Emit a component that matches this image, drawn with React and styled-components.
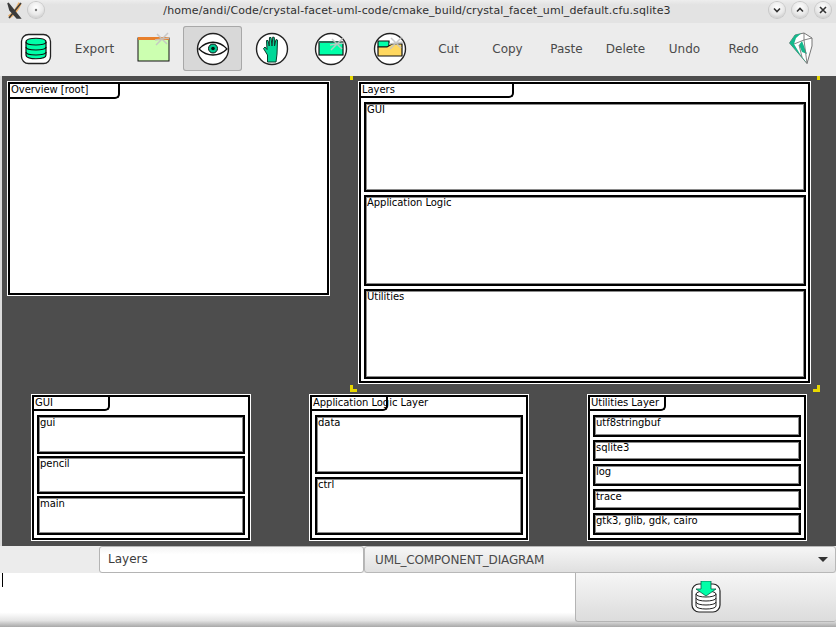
import React from "react";
import styled, { createGlobalStyle } from "styled-components";

const Global = createGlobalStyle`
  html, body { margin: 0; padding: 0; width: 836px; height: 627px; overflow: hidden; background: #e4e4e4; }
  #root { width: 836px; height: 627px; }
  * { box-sizing: border-box; }
`;
const Window = styled.div`
  width: 836px; height: 627px; display: flex; flex-direction: column;
  font-family: "DejaVu Sans", sans-serif; color: #3c3c3c; background: #ececec;
`;
const TitleBar = styled.div`
  height: 23px; flex: none; display: flex; align-items: center; padding: 0 5px 3px 6px;
  background: linear-gradient(#eeeeee, #e3e3e3 20%, #e3e3e3);
`;
const AppMark = styled.div` width: 17px; height: 17px; flex: none; display: flex; `;
const Title = styled.div`
  flex: 1; text-align: center; font-size: 11px; letter-spacing: 0.09px; color: #303030; white-space: nowrap; padding-left: 28px;
`;
const Round = styled.div`
  width: 16px; height: 16px; border-radius: 50%; flex: none; margin-left: ${p => p.$gap || 7}px;
  display: flex; align-items: center; justify-content: center;
  background: radial-gradient(circle at 50% 35%, #ffffff, #e8e8e8 55%, #b8b8b8);
  box-shadow: 0 0 0 1px #c8c8c8;
`;
const Toolbar = styled.div`
  height: 53px; flex: none; display: flex; align-items: center; padding: 0 0 2px 6px; background: #ececec;
`;
const ToolButton = styled.div`
  width: 59px; height: 45px; flex: none; display: flex; align-items: center; justify-content: center;
  font-size: 12px; color: #4a4a4a; border-radius: 3px;
  ${p => p.$active ? "background: #d8d8d8; box-shadow: inset 0 0 0 1px #a8a8a8;" : ""}
`;
const Canvas = styled.div`
  height: 470px; flex: none; background: #4d4d4d; border-left: 2px solid #dcdcdc; padding-top: 5px;
  display: flex; flex-direction: column;
`;
const TopRow = styled.div` display: flex; align-items: flex-start; padding-left: 5px; gap: 28px; `;
const BottomRow = styled.div` display: flex; padding-left: 29px; gap: 58px; margin-top: 10px; `;
const Diagram = styled.div`
  position: relative; flex: none; width: ${p => p.$w}px; height: ${p => p.$h}px;
  background: #fff; border: 1px solid #fff;
  display: flex; flex-direction: column;
  &::before { content: ""; position: absolute; inset: 0; border: 2px solid #000; pointer-events: none; z-index: 2; }
`;
const Tab = styled.div`
  width: ${p => p.$w}px; height: ${p => p.$h || 15}px; flex: none; margin: 2px 0 0 2px; padding: 0 0 0 1px;
  border-right: 2px solid #000; border-bottom: 2px solid #000; border-bottom-right-radius: 5px;
  font-size: 10px; letter-spacing: -0.05px; line-height: 12px; color: #000; white-space: nowrap;
`;
const Parts = styled.div`
  flex: 1; min-height: 0; display: flex; flex-direction: column; gap: ${p => p.$gap}px; padding: ${p => p.$pad};
`;
const Part = styled.div`
  flex: 1; min-height: 0; border: 2px solid #000; padding-left: 1px; background: #fff;
  box-shadow: inset 0 0 0 1px #8a8a8a;
  font-size: 10px; letter-spacing: -0.05px; line-height: 12px; color: #000; white-space: nowrap;
`;
const Corner = styled.div`
  position: absolute; width: ${p => p.$w}px; height: ${p => p.$h}px; background: #e8d800;
  ${p => p.$pos}
`;
const Fields = styled.div` height: 27px; flex: none; display: flex; padding-left: 99px; background: #ececec; `;
const NameInput = styled.div`
  width: 265px; height: 27px; flex: none; background: linear-gradient(#f4f4f4, #ffffff 30%);
  border: 1px solid #b4b4b4; border-radius: 3px; padding-left: 8px;
  font-size: 12px; line-height: 25px; color: #3c3c3c;
`;
const TypeSelect = styled.div`
  flex: 1; height: 27px; display: flex; align-items: center; justify-content: space-between;
  padding: 0 7px 0 10px; background: linear-gradient(#f6f6f6, #e0e0e0);
  border: 1px solid #b8b8b8; border-radius: 3px; font-size: 12px; letter-spacing: -0.14px; color: #4a4a4a;
`;
const Arrow = styled.div`
  width: 0; height: 0; border-left: 5px solid transparent; border-right: 5px solid transparent; border-top: 5px solid #333;
`;
const Footer = styled.div`
  flex: 1; min-height: 0; display: flex; align-items: flex-start;
  background: linear-gradient(#fff, #fff 73%, #e4e4e4 88%, #a8a8a8);
`;
const TextArea = styled.div` flex: 1; height: 100%; padding-left: 2px; `;
const Caret = styled.div` width: 1px; height: 14px; background: #000; `;
const Commit = styled.div`
  width: 261px; height: 49px; flex: none; display: flex; align-items: center; justify-content: center;
  background: linear-gradient(#f6f6f6, #dcdcdc);
  border: 1px solid #b4b4b4; border-top: none; border-right: none; border-radius: 0 0 3px 3px;
`;

const G = "#00ffa8";
const Sparkle = ({ x, y }) => (
  <g stroke="#c4c4c4" strokeWidth="1.5" fill="none" opacity="0.9">
    <path d={`M${x - 6} ${y + 6}L${x + 6} ${y - 6}M${x - 5} ${y - 5}L${x + 5} ${y + 5}M${x - 7} ${y + 1}L${x + 7} ${y - 1}`} />
  </g>
);
const Disk = ({ children }) => (
  <svg width="34" height="34" viewBox="0 0 34 34">
    <circle cx="17" cy="17" r="15.5" fill="#fff" stroke="#222" strokeWidth="1.4" />
    {children}
  </svg>
);
const DbIcon = () => (
  <svg width="32" height="32" viewBox="0 0 32 32">
    <rect x="1.5" y="1.5" width="29" height="29" rx="7" fill="#fff" stroke="#222" strokeWidth="1.3" />
    <path d="M6 9c0-5 20-5 20 0v13c0 5-20 5-20 0z" fill={G} stroke="#111" strokeWidth="1.2" />
    <path d="M6 9c0 4 20 4 20 0M6 14c0 4 20 4 20 0M6 19c0 4 20 4 20 0" fill="none" stroke="#111" strokeWidth="1.2" />
  </svg>
);
const WindowIcon = () => (
  <svg width="34" height="34" viewBox="0 0 34 34">
    <rect x="1" y="6" width="31" height="23" fill="#ccffb0" stroke="#111" strokeWidth="1" />
    <rect x="1" y="5" width="31" height="3" fill="#e8802c" />
    <Sparkle x={25} y={7} />
  </svg>
);
const EyeIcon = () => (
  <Disk>
    <path d="M3 17C11 8 23 8 31 17C23 25 11 25 3 17z" fill="#fff" stroke="#111" strokeWidth="1.3" />
    <circle cx="17" cy="16.5" r="4.5" fill="#00c890" stroke="#111" strokeWidth="1" />
    <circle cx="17" cy="16.5" r="1.8" fill="#001a10" />
  </Disk>
);
const HandIcon = () => (
  <Disk>
    <path d="M12.5 30V23L8.5 16.5L10 15L12 17.5L11.5 8.5L13 8.5L14.2 14L14.5 5.5L16 5.5L17 14L17.8 5L19.3 5.5L19.5 14L21 7.5L22.5 8L22 22L21 30z" fill="#00d898" stroke="#0a3c2c" strokeWidth="1" strokeLinejoin="round" />
  </Disk>
);
const FolderIcon = () => (
  <Disk>
    <rect x="5" y="10" width="24" height="13" fill={G} stroke="#111" strokeWidth="1.2" />
    <rect x="5" y="9" width="20" height="2" fill="#2a6a58" />
    <Sparkle x={23} y={12} />
  </Disk>
);
const FolderOpenIcon = () => (
  <Disk>
    <path d="M5 9H16V15H5z" fill={G} stroke="#111" strokeWidth="1.2" />
    <path d="M5 15H14L19 12H29V24H5z" fill="#ffd860" stroke="#111" strokeWidth="1.2" />
    <Sparkle x={23} y={11} />
  </Disk>
);
const GemIcon = () => (
  <svg width="26" height="34" viewBox="0 0 26 34" style={{ marginLeft: -4 }}>
    <path d="M1.5 11L7 3L16 1L24 6L24 14L19 31.5z" fill="#fff" stroke="#777" strokeWidth="1" strokeLinejoin="round" />
    <path d="M1.5 11L7 3L13 1.6L8 6L6 12L12 22L19 31.5z" fill="#14b88c" />
    <path d="M11 13L14 9L19 22L14 20z" fill="#14b88c" />
    <path d="M6 12L16 8L24 6M16 1L16 8L19 31.5M11 13L14 25" fill="none" stroke="#777" strokeWidth="0.9" />
  </svg>
);
const AppX = () => (
  <svg width="17" height="17" viewBox="0 0 17 17">
    <path d="M3 15C9 11 12 6 14 1" stroke="#f0a040" strokeWidth="3.5" fill="none" opacity="0.75" />
    <path d="M2 1L14 16H11L4 8z M15 1L3 16" fill="#3c3c3c" stroke="#3c3c3c" strokeWidth="1.6" />
  </svg>
);
const DownloadDb = () => (
  <svg width="32" height="32" viewBox="0 0 32 32">
    <rect x="2" y="3" width="28" height="28" rx="7" fill="#fff" stroke="#222" strokeWidth="1.2" />
    <path d="M6 13c0-4 20-4 20 0v12c0 4-20 4-20 0z" fill="#fff" stroke="#222" strokeWidth="1" />
    <path d="M6 17c0 4 20 4 20 0M6 21c0 4 20 4 20 0M6 13c0 4 20 4 20 0" fill="none" stroke="#222" strokeWidth="1" />
    <path d="M11 0H21V8H26L16 15L6 8H11z" fill={G} stroke="#0a5c44" strokeWidth="0.8" />
  </svg>
);
const Chevron = ({ d }) => (
  <svg width="10" height="10" viewBox="0 0 10 10">
    <path d={d} fill="none" stroke="#333" strokeWidth="1.6" />
  </svg>
);

const tools = [
  { icon: <DbIcon /> }, { label: "Export" }, { icon: <WindowIcon /> }, { icon: <EyeIcon />, active: true },
  { icon: <HandIcon /> }, { icon: <FolderIcon /> }, { icon: <FolderOpenIcon /> }, { label: "Cut" },
  { label: "Copy" }, { label: "Paste" }, { label: "Delete" }, { label: "Undo" }, { label: "Redo" }, { icon: <GemIcon /> },
];
const lower = [
  { name: "GUI", parts: ["gui", "pencil", "main"], gap: 2 },
  { name: "Application Logic Layer", parts: ["data", "ctrl"], gap: 3 },
  { name: "Utilities Layer", parts: ["utf8stringbuf", "sqlite3", "log", "trace", "gtk3, glib, gdk, cairo"], gap: 3 },
];

export default function App() {
  return (
    <Window>
      <Global />
      <TitleBar>
        <AppMark><AppX /></AppMark>
        <Round $gap={5}><svg width="4" height="4"><circle cx="2" cy="2" r="1.2" fill="#777" /></svg></Round>
        <Title>/home/andi/Code/crystal-facet-uml-code/cmake_build/crystal_facet_uml_default.cfu.sqlite3</Title>
        <Round><Chevron d="M2 3.5L5 6.5L8 3.5" /></Round>
        <Round><Chevron d="M2 6.5L5 3.5L8 6.5" /></Round>
        <Round><Chevron d="M2 2L8 8M8 2L2 8" /></Round>
      </TitleBar>
      <Toolbar>
        {tools.map((t, i) => (
          <ToolButton key={i} $active={t.active}>{t.icon || t.label}</ToolButton>
        ))}
      </Toolbar>
      <Canvas>
        <TopRow>
          <Diagram $w={323} $h={215}>
            <Tab $w={110} $h={15}>Overview [root]</Tab>
          </Diagram>
          <Diagram $w={453} $h={303}>
            <Corner $w={3} $h={4} $pos="left: -9px; top: -6px;" />
            <Corner $w={3} $h={4} $pos="right: -10px; top: -6px;" />
            <Corner $w={7} $h={3} $pos="left: -9px; bottom: -9px;" />
            <Corner $w={3} $h={7} $pos="left: -9px; bottom: -9px;" />
            <Corner $w={7} $h={3} $pos="right: -10px; bottom: -9px;" />
            <Corner $w={3} $h={7} $pos="right: -10px; bottom: -9px;" />
            <Tab $w={153} $h={14}>Layers</Tab>
            <Parts $gap={3} $pad="4px 4px 4px 5px">
              <Part>GUI</Part>
              <Part>Application Logic</Part>
              <Part>Utilities</Part>
            </Parts>
          </Diagram>
        </TopRow>
        <BottomRow>
          {lower.map(d => (
            <Diagram key={d.name} $w={220} $h={147}>
              <Tab $w={76} $h={14}>{d.name}</Tab>
              <Parts $gap={d.gap} $pad="4px 5px 5px 5px">
                {d.parts.map(p => <Part key={p}>{p}</Part>)}
              </Parts>
            </Diagram>
          ))}
        </BottomRow>
      </Canvas>
      <Fields>
        <NameInput>Layers</NameInput>
        <TypeSelect>UML_COMPONENT_DIAGRAM<Arrow /></TypeSelect>
      </Fields>
      <Footer>
        <TextArea><Caret /></TextArea>
        <Commit><DownloadDb /></Commit>
      </Footer>
    </Window>
  );
}
